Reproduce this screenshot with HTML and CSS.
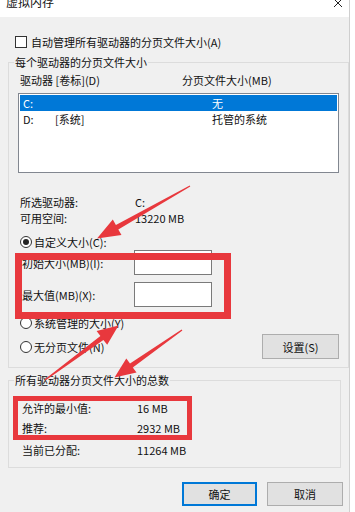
FILE: index.html
```html
<!DOCTYPE html>
<html lang="zh-CN">
    <head>
        <meta charset="utf-8">
        <title>虚拟内存</title>
        <link rel="stylesheet" href="styles.css">
    </head>
    <body>
        <div class="dialog">
            <div class="titlebar">
                <span class="title">虚拟内存</span>
                <svg class="close" width="10" height="10" viewBox="0 0 10 10">
                    <path d="M1 1L9 9M9 1L1 9" stroke="#222" stroke-width="1"/>
                </svg>
            </div>

            <label class="auto-row">
                <span class="checkbox"></span>
                <span>自动管理所有驱动器的分页文件大小(A)</span>
            </label>

            <fieldset class="group group-drives">
                <legend>每个驱动器的分页文件大小</legend>
                <div class="group-body">
                    <div class="cols">
                        <span class="col-drive">驱动器 [卷标](D)</span>
                        <span>分页文件大小(MB)</span>
                    </div>
                    <div class="list">
                        <div class="list-row selected">
                            <span class="cell-drive">C:</span>
                            <span class="cell-label"></span>
                            <span>无</span>
                        </div>
                        <div class="list-row">
                            <span class="cell-drive">D:</span>
                            <span class="cell-label">[系统]</span>
                            <span>托管的系统</span>
                        </div>
                    </div>

                    <div class="info">
                        <div class="info-row"><span class="info-key">所选驱动器:</span><span>C:</span></div>
                        <div class="info-row"><span class="info-key">可用空间:</span><span>13220 MB</span></div>
                    </div>

                    <div class="radio-row first">
                        <span class="radio checked"></span>
                        <span>自定义大小(C):</span>
                    </div>
                    <div class="size-row">
                        <span class="size-label">初始大小(MB)(I):</span>
                        <span class="textbox"></span>
                    </div>
                    <div class="size-row second">
                        <span class="size-label">最大值(MB)(X):</span>
                        <span class="textbox"></span>
                    </div>
                    <div class="radio-row">
                        <span class="radio"></span>
                        <span>系统管理的大小(Y)</span>
                    </div>
                    <div class="radio-row last">
                        <span class="radio"></span>
                        <span>无分页文件(N)</span>
                        <span class="btn btn-set">设置(S)</span>
                    </div>
                </div>
            </fieldset>

            <fieldset class="group group-total">
                <legend>所有驱动器分页文件大小的总数</legend>
                <div class="group-body">
                    <div class="total-row r1"><span class="total-key">允许的最小值:</span><span>16 MB</span></div>
                    <div class="total-row r2"><span class="total-key">推荐:</span><span>2932 MB</span></div>
                    <div class="total-row r3"><span class="total-key">当前已分配:</span><span>11264 MB</span></div>
                </div>
            </fieldset>

            <div class="actions">
                <span class="btn btn-default">确定</span>
                <span class="btn">取消</span>
            </div>
        </div>

        <!-- annotation marks drawn over the dialog -->
        <div class="mark mark-size"></div>
        <div class="mark mark-total"></div>
        <svg class="arrows" width="355" height="512" viewBox="0 0 355 512">
            <polygon points="190.3,186.5 118.3,229.4 121.5,235 97,238.5 112.8,219.6 115.9,225 189.7,185.5"/>
            <polygon points="45.4,380.5 103.4,339.9 107.2,344.8 118.5,325.5 96.6,331 100.4,335.9 44.6,379.5"/>
            <polygon points="182.4,330.5 132.8,367.5 136.5,372.6 114.5,377.5 126.3,358.5 130,363.5 181.6,329.5"/>
        </svg>
    </body>
</html>
```

FILE: styles.css
```css
html, body {
    margin: 0;
    padding: 0;
    background: #fff;
}
body {
    width: 355px;
    height: 512px;
    overflow: hidden;
    position: relative;
    font-family: "Noto Sans CJK SC", "Noto Sans", sans-serif;
    font-size: 11px;
    color: #111;
}
.dialog {
    width: 349px;
    height: 512px;
    background: #f0f0f0;
    border-right: 1px solid #cfcfcf;
}
.titlebar {
    height: 17px;
    background: #fff;
    display: flex;
    justify-content: space-between;
    align-items: flex-start;
    overflow: hidden;
}
.title {
    font-size: 12px;
    line-height: 16px;
    margin-top: -6px;
    margin-left: 6px;
}
.close {
    margin-top: -2px;
    margin-right: 6px;
}
.auto-row {
    display: flex;
    align-items: center;
    height: 16px;
    margin-top: 17px;
    padding-left: 15px;
    gap: 4px;
}
.checkbox {
    width: 10px;
    height: 10px;
    border: 1px solid #333;
    background: #fff;
}
.group {
    margin: 5px 0 0 8px;
    width: 333px;
    padding: 0;
    border: 1px solid #dcdcdc;
    box-sizing: border-box;
}
.group legend {
    margin-left: 5px;
    padding: 0 1px;
    line-height: 14px;
    font-size: 11px;
}
.group-drives .group-body {
    padding: 0 9px 8px 9px;
}
.cols {
    display: flex;
    margin-top: 3px;
    line-height: 16px;
    padding-left: 2px;
}
.col-drive {
    width: 162px;
}
.list {
    margin-top: 5px;
    width: 321px;
    height: 80px;
    box-sizing: border-box;
    border: 1px solid #828790;
    background: #fff;
    padding-top: 1px;
}
.list-row {
    display: flex;
    height: 16px;
    line-height: 16px;
    margin: 0 1px;
}
.list-row.selected {
    background: #0078d7;
    color: #fff;
}
.cell-drive {
    width: 32px;
    padding-left: 3px;
}
.cell-label {
    width: 157px;
}
.info {
    margin-top: 21px;
    padding-left: 2px;
}
.info-row {
    display: flex;
    line-height: 16px;
}
.info-key {
    width: 115px;
}
.radio-row {
    display: flex;
    align-items: center;
    height: 16px;
    margin-top: 8px;
    padding-left: 2px;
    gap: 2px;
}
.radio-row.last {
    height: 25px;
    margin-top: 3px;
}
.radio {
    width: 10px;
    height: 10px;
    border: 1px solid #333;
    border-radius: 50%;
    background: #fff;
    display: flex;
    align-items: center;
    justify-content: center;
}
.radio.checked::after {
    content: "";
    width: 6px;
    height: 6px;
    border-radius: 50%;
    background: #222;
}
.size-row {
    display: flex;
    align-items: center;
    height: 25px;
    padding-left: 4px;
}
.size-row.second {
    margin-top: 7px;
}
.size-label {
    width: 112px;
}
.textbox {
    width: 78px;
    height: 25px;
    box-sizing: border-box;
    border: 1px solid #7a7a7a;
    background: #fff;
}
.btn {
    display: flex;
    align-items: center;
    justify-content: center;
    height: 24px;
    box-sizing: border-box;
    border: 1px solid #adadad;
    background: #e1e1e1;
    width: 76px;
}
.btn-set {
    margin-left: auto;
    width: 77px;
    height: 25px;
}
.group-total {
    margin-top: 5px;
}
.group-total .group-body {
    padding: 0 9px 9px 13px;
}
.total-row {
    display: flex;
    line-height: 16px;
}
.total-row.r1 {
    margin-top: 13px;
}
.total-row.r2 {
    margin-top: 4px;
}
.total-row.r3 {
    margin-top: 6px;
}
.total-key {
    width: 115px;
}
.actions {
    display: flex;
    justify-content: flex-end;
    gap: 10px;
    margin-top: 14px;
    padding-right: 6px;
}
.btn-default {
    width: 75px;
    border-color: #0078d7;
    box-shadow: inset 0 0 0 1px #0078d7;
}
.mark {
    position: absolute;
    box-sizing: border-box;
    border-style: solid;
    border-color: #e8383d;
}
.mark-size {
    left: 15px;
    top: 253px;
    width: 216px;
    height: 66px;
    border-width: 7px;
}
.mark-total {
    left: 13px;
    top: 396px;
    width: 179px;
    height: 44px;
    border-width: 5px;
}
.arrows {
    position: absolute;
    left: 0;
    top: 0;
    fill: #e8383d;
}
```
